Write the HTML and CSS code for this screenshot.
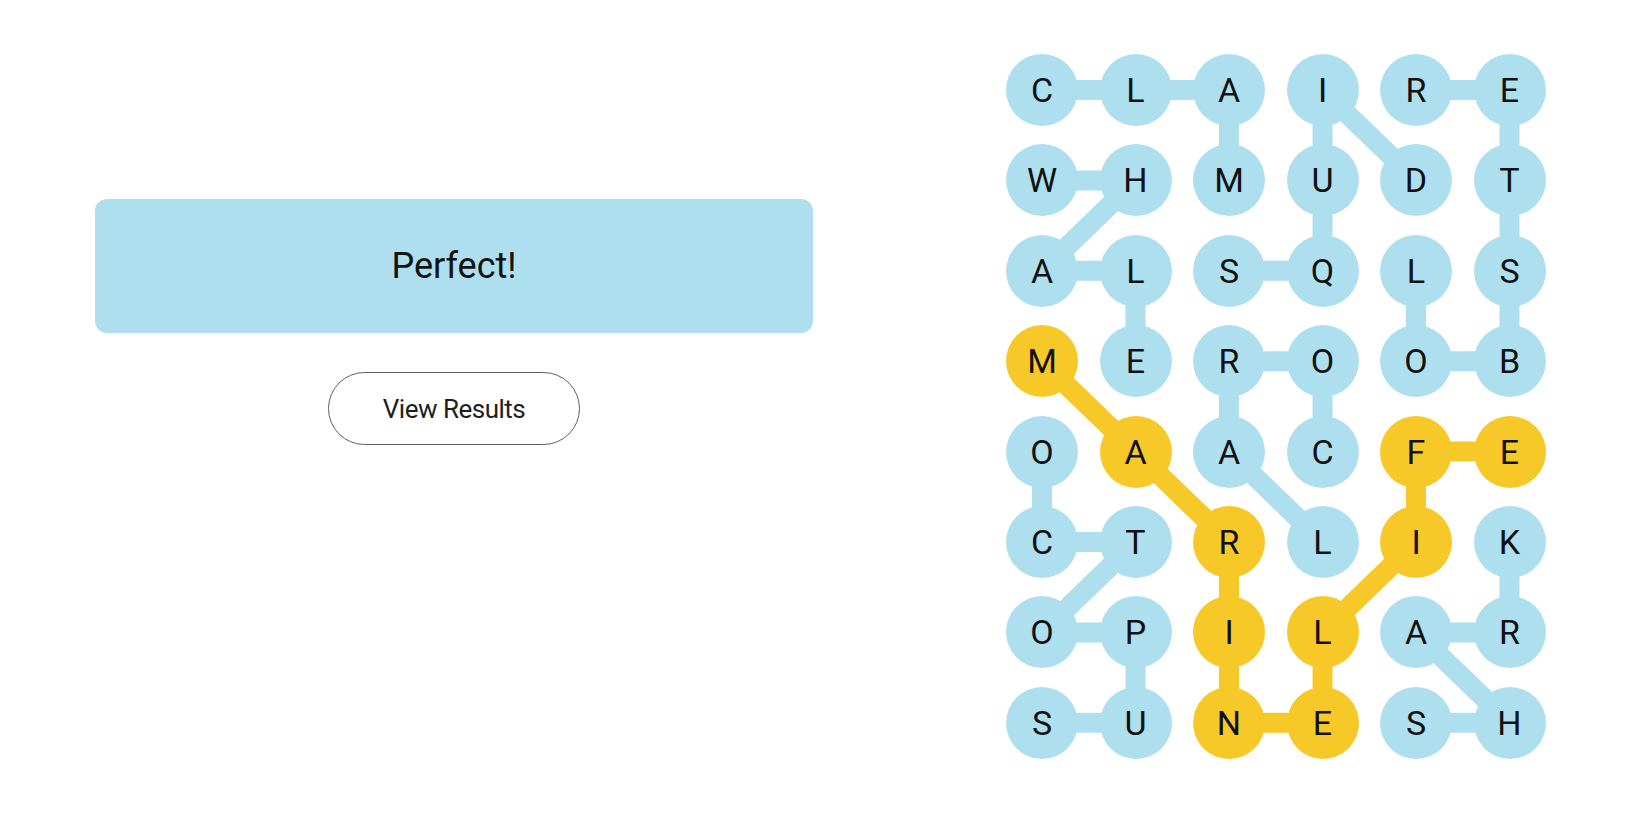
FILE: index.html
```html
<!DOCTYPE html>
<html lang="en">
<head>
<meta charset="utf-8">
<title>Strands</title>
<link rel="stylesheet" href="styles.css">
</head>
<body>
<main class="page">
  <section class="result">
    <div class="banner">Perfect!</div>
    <button class="results-btn" type="button">View Results</button>
  </section>
  <section class="board">
    <svg class="links" width="540" height="705" viewBox="0 0 540 705" aria-hidden="true">
      <g class="blue" fill="none" stroke-linecap="round" stroke-linejoin="round">
        <polyline points="36,36 129.5,36 223,36 223,126.4"/>
        <polyline points="36,126.4 129.5,126.4 36,216.8 129.5,216.8 129.5,307.2"/>
        <polyline points="223,216.8 316.5,216.8 316.5,126.4 316.5,36 410,126.4"/>
        <polyline points="410,216.8 410,307.2 503.5,307.2 503.5,216.8 503.5,126.4 503.5,36 410,36"/>
        <polyline points="316.5,397.6 316.5,307.2 223,307.2 223,397.6 316.5,488"/>
        <polyline points="36,397.6 36,488 129.5,488 36,578.4 129.5,578.4 129.5,668.8 36,668.8"/>
        <polyline points="410,668.8 503.5,668.8 410,578.4 503.5,578.4 503.5,488"/>
      </g>
      <g class="gold" fill="none" stroke-linecap="round" stroke-linejoin="round">
        <polyline points="36,307.2 129.5,397.6 223,488 223,578.4 223,668.8 316.5,668.8 316.5,578.4 410,488 410,397.6 503.5,397.6"/>
      </g>
    </svg>
    <div class="grid">
      <span class="cell">C</span><span class="cell">L</span><span class="cell">A</span><span class="cell">I</span><span class="cell">R</span><span class="cell">E</span>
      <span class="cell">W</span><span class="cell">H</span><span class="cell">M</span><span class="cell">U</span><span class="cell">D</span><span class="cell">T</span>
      <span class="cell">A</span><span class="cell">L</span><span class="cell">S</span><span class="cell">Q</span><span class="cell">L</span><span class="cell">S</span>
      <span class="cell span">M</span><span class="cell">E</span><span class="cell">R</span><span class="cell">O</span><span class="cell">O</span><span class="cell">B</span>
      <span class="cell">O</span><span class="cell span">A</span><span class="cell">A</span><span class="cell">C</span><span class="cell span">F</span><span class="cell span">E</span>
      <span class="cell">C</span><span class="cell">T</span><span class="cell span">R</span><span class="cell">L</span><span class="cell span">I</span><span class="cell">K</span>
      <span class="cell">O</span><span class="cell">P</span><span class="cell span">I</span><span class="cell span">L</span><span class="cell">A</span><span class="cell">R</span>
      <span class="cell">S</span><span class="cell">U</span><span class="cell span">N</span><span class="cell span">E</span><span class="cell">S</span><span class="cell">H</span>
    </div>
  </section>
</main>
</body>
</html>
```
FILE: styles.css
```css
html, body {
  margin: 0;
  padding: 0;
  background: #ffffff;
}

body {
  font-family: Roboto, "Liberation Sans", sans-serif;
  color: #121212;
}

.page {
  display: flex;
  align-items: flex-start;
  padding: 50px 0 0 95px;
  gap: 193px;
}

.result {
  width: 718px;
  margin-top: 149px;
  display: flex;
  flex-direction: column;
  align-items: center;
  gap: 39px;
}

.banner {
  width: 100%;
  height: 134px;
  background: #aedfee;
  border-radius: 12px;
  display: flex;
  align-items: center;
  justify-content: center;
  font-size: 36px;
  font-weight: 400;
  color: #121212;
}

.results-btn {
  width: 252px;
  height: 73px;
  border: 1px solid #5f5f5f;
  border-radius: 37px;
  background: #ffffff;
  font-family: Roboto, "Liberation Sans", sans-serif;
  font-size: 26px;
  letter-spacing: -0.5px;
  color: #1e1e1e;
  padding: 0;
}

.board {
  position: relative;
  margin-top: 4px;
  width: 540px;
  height: 705px;
}

.links {
  position: absolute;
  left: 0;
  top: 0;
}

.blue {
  stroke: #aedfee;
  stroke-width: 20;
}

.gold {
  stroke: #f6c929;
  stroke-width: 20;
}

.grid {
  position: relative;
  display: grid;
  grid-template-columns: repeat(6, 72px);
  grid-auto-rows: 72px;
  column-gap: 21.5px;
  row-gap: 18.4px;
}

.cell {
  width: 72px;
  height: 72px;
  border-radius: 50%;
  background: #aedfee;
  display: flex;
  align-items: center;
  justify-content: center;
  font-size: 34px;
  font-weight: 400;
  color: #111111;
  line-height: 1;
}

.cell.span {
  background: #f6c929;
}
```
